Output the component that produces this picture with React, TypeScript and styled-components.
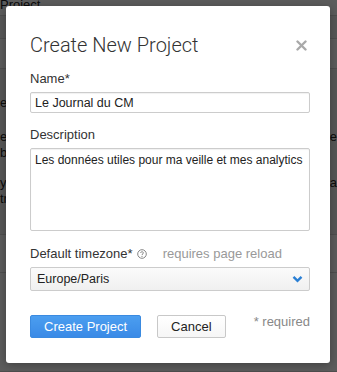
import styled, { createGlobalStyle } from "styled-components"

const GlobalStyle = createGlobalStyle`
  html, body {
    margin: 0;
    padding: 0;
    width: 337px;
    height: 372px;
    overflow: hidden;
    font-family: "Liberation Sans", Arial, sans-serif;
  }
`

const Screen = styled.div`
  position: relative;
  width: 337px;
  height: 372px;
  overflow: hidden;
  background: #fff;
`

// the page behind the modal
const Page = styled.div`
  display: flex;
  flex-direction: column;
  color: #222;
  font-size: 13px;
`

const PageRow = styled.div<{ $h: number; $shade?: boolean }>`
  height: ${(p) => p.$h}px;
  border-bottom: 1px solid #d8d8d8;
  background: ${(p) => (p.$shade ? "#f2f2f2" : "#fff")};
  display: flex;
  flex-direction: column;
  box-sizing: border-box;
`

const PageLine = styled.div<{ $top?: number }>`
  display: flex;
  justify-content: space-between;
  line-height: 16px;
  white-space: nowrap;
  margin-top: ${(p) => p.$top ?? 0}px;
`

const Overlay = styled.div`
  position: absolute;
  inset: 0;
  background: rgba(0, 0, 0, 0.64);
`

const Modal = styled.div`
  position: absolute;
  left: 6px;
  top: 6px;
  width: 324px;
  height: 357px;
  box-sizing: border-box;
  background: #fff;
  border-radius: 3px;
  box-shadow: 0 2px 10px rgba(0, 0, 0, 0.3);
  padding: 26px 20px 0 24px;
  display: flex;
  flex-direction: column;
  color: #333;
`

const Header = styled.div`
  display: flex;
  justify-content: space-between;
  align-items: center;
  height: 26px;
  margin-bottom: 13px;
`

const Title = styled.h2`
  margin: 0;
  font-family: Roboto, "Liberation Sans", sans-serif;
  font-weight: 300;
  font-size: 20px;
  color: #333;
`

const Close = styled.button`
  border: 0;
  background: none;
  padding: 0;
  margin-right: 3px;
  width: 12px;
  height: 12px;
  display: flex;
  align-items: center;
  justify-content: center;
  cursor: pointer;
`

const Field = styled.div<{ $gap?: number }>`
  display: flex;
  flex-direction: column;
  margin-bottom: ${(p) => p.$gap ?? 15}px;
`

const Label = styled.label`
  display: flex;
  align-items: center;
  font-size: 13px;
  line-height: 16px;
  color: #333;
  margin-bottom: 5px;
`

const Hint = styled.span`
  color: #999;
  margin-left: 16px;
`

const Help = styled.span`
  margin-left: 4px;
  display: inline-flex;
`

const TextInput = styled.input`
  height: 21px;
  box-sizing: border-box;
  border: 1px solid #ccc;
  border-radius: 2px;
  padding: 0 4px;
  font-family: inherit;
  font-size: 12.5px;
  color: #222;
  outline: none;
  box-shadow: inset 0 1px 1px rgba(0, 0, 0, 0.06);
`

const TextArea = styled.textarea`
  height: 83px;
  box-sizing: border-box;
  border: 1px solid #ccc;
  border-radius: 2px;
  padding: 4px 1px 4px 4px;
  font-family: inherit;
  font-size: 12px;
  line-height: 15px;
  color: #222;
  resize: none;
  outline: none;
  overflow: hidden;
  box-shadow: inset 0 1px 1px rgba(0, 0, 0, 0.06);
`

const Select = styled.div`
  height: 24px;
  box-sizing: border-box;
  border: 1px solid #ccc;
  border-radius: 2px;
  background: linear-gradient(#fbfbfb, #f0f0f0);
  display: flex;
  align-items: center;
  justify-content: space-between;
  padding: 0 6px;
  font-size: 12.5px;
  color: #222;
`

const Footer = styled.div`
  display: flex;
  align-items: center;
  margin-top: 24px;
`

const Button = styled.button<{ $primary?: boolean }>`
  height: 23px;
  box-sizing: border-box;
  border-radius: 2px;
  font-family: inherit;
  font-size: 13px;
  padding: 0 13px;
  cursor: pointer;
  border: 1px solid ${(p) => (p.$primary ? "#3a8ae0" : "#c8c8c8")};
  background: ${(p) =>
    p.$primary ? "linear-gradient(#4b9ef0, #3a8ae6)" : "linear-gradient(#fff, #f6f6f6)"};
  color: ${(p) => (p.$primary ? "#fff" : "#222")};
  margin-right: 16px;
`

const Required = styled.span`
  margin-left: auto;
  font-size: 13px;
  color: #888;
  margin-top: -10px;
`

const App = () => {
  return (
    <>
      <GlobalStyle />
      <Screen>
        <Page>
          <PageRow $h={16}>
            <PageLine $top={-3}>
              <span>Project</span>
            </PageLine>
          </PageRow>
          <PageRow $h={23} $shade />
          <PageRow $h={30} />
          <PageRow $h={166} $shade>
            <PageLine $top={26}>
              <span>e</span>
            </PageLine>
            <PageLine $top={18}>
              <span>e</span>
              <span>e</span>
            </PageLine>
            <PageLine>
              <span>b</span>
            </PageLine>
            <PageLine $top={14}>
              <span>y</span>
              <span>e a</span>
            </PageLine>
            <PageLine>
              <span>tr</span>
            </PageLine>
          </PageRow>
          <PageRow $h={38} />
          <PageRow $h={99} />
        </Page>
        <Overlay />
        <Modal>
          <Header>
            <Title>Create New Project</Title>
            <Close aria-label="Close">
              <svg width="11" height="11" viewBox="0 0 11 11">
                <path d="M1.5 1.5 L9.5 9.5 M9.5 1.5 L1.5 9.5" stroke="#a9a9a9" strokeWidth="2.4" strokeLinecap="round" />
              </svg>
            </Close>
          </Header>

          <Field $gap={14}>
            <Label>Name*</Label>
            <TextInput defaultValue="Le Journal du CM" />
          </Field>

          <Field $gap={15}>
            <Label>Description</Label>
            <TextArea defaultValue="Les données utiles pour ma veille et mes analytics" />
          </Field>

          <Field $gap={0}>
            <Label>
              Default timezone*
              <Help>
                <svg width="10" height="10" viewBox="0 0 10 10">
                  <circle cx="5" cy="5" r="4.3" fill="none" stroke="#777" strokeWidth="0.9" />
                  <path d="M3.6 4 C3.6 2.4 6.4 2.4 6.4 3.9 C6.4 4.9 5 4.9 5 6" fill="none" stroke="#777" strokeWidth="0.9" />
                  <circle cx="5" cy="7.3" r="0.6" fill="#777" />
                </svg>
              </Help>
              <Hint>requires page reload</Hint>
            </Label>
            <Select>
              <span>Europe/Paris</span>
              <svg width="11" height="8" viewBox="0 0 11 8">
                <path d="M1.5 1.8 L5.5 5.8 L9.5 1.8" fill="none" stroke="#2a7fd4" strokeWidth="2.4" />
              </svg>
            </Select>
          </Field>

          <Footer>
            <Button $primary>Create Project</Button>
            <Button>Cancel</Button>
            <Required>* required</Required>
          </Footer>
        </Modal>
      </Screen>
    </>
  )
}

export default App
